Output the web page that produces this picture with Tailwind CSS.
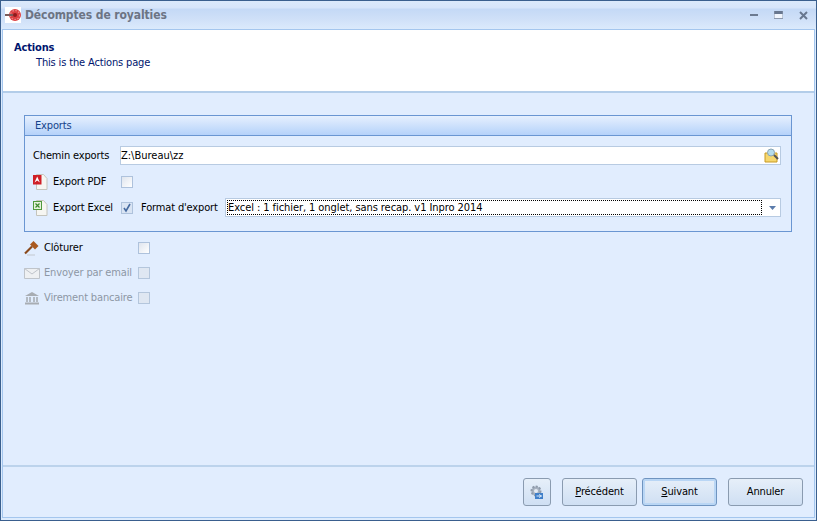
<!DOCTYPE html>
<html lang="fr">
<head>
  <meta charset="UTF-8" />
  <title>Décomptes de royalties</title>
  <script src="https://cdn.jsdelivr.net/npm/@tailwindcss/browser@4"></script>
</head>
<body class="w-[817px] h-[521px] overflow-hidden bg-[#e1edfe] font-['DejaVu_Sans_Condensed','DejaVu_Sans',sans-serif] text-[11px] leading-[14px] tracking-[-0.15px] text-black">
  <div class="w-full h-full flex flex-col border border-[#3a5f8e] bg-[#dcebfd]">
    <!-- title bar -->
    <div class="h-[28px] shrink-0 flex items-center pl-[4px] pr-[8px] bg-[linear-gradient(#dbe9fb_0,#d6e5fa_7px,#c4d9f6_8px,#cfe0f8_18px,#dbeafc_28px)]">
      <svg class="w-[16px] h-[16px] bg-white" viewBox="0 0 16 16">
        <circle cx="10" cy="8" r="6" fill="#dc3f42" />
        <circle cx="10" cy="8" r="4.5" fill="none" stroke="#ec8a8a" stroke-width="1.2" stroke-dasharray="1.5 1.5" />
        <circle cx="10" cy="8" r="2" fill="#8f1c1c" />
        <rect x="0" y="7" width="8" height="2" fill="#7a5a5a" />
      </svg>
      <span class="ml-[4px] font-bold text-[12px] text-[#6c7484] tracking-[-0.1px]">Décomptes de royalties</span>
      <div class="ml-auto flex items-center gap-[16px]">
        <svg class="w-[8px] h-[8px]" viewBox="0 0 8 8"><rect y="3" width="8" height="2" fill="#6c7a90" /></svg>
        <svg class="w-[9px] h-[8px]" viewBox="0 0 9 8"><path d="M0 0h9v8H0z" fill="#f0f5fd" /><path d="M0 0h9v3H0z" fill="#68778f" /><path d="M0 0v8M9 0v8M0 7.5h9" stroke="#8b98ad" /></svg>
        <svg class="w-[9px] h-[9px]" viewBox="0 0 9 9"><path d="M1 1l7 7M8 1L1 8" stroke="#68778f" stroke-width="2" /></svg>
      </div>
    </div>

    <div class="flex-1 mx-[1px] mb-[2px] flex flex-col border border-[#a4c6ee] bg-[#e1edfe]">
      <!-- page header -->
      <div class="h-[63px] shrink-0 bg-white border-b-2 border-[#b3cde9] pl-[11px] pt-[11px] text-[#00156e]">
        <div class="font-bold">Actions</div>
        <div class="pl-[22px] mt-[1px]">This is the Actions page</div>
      </div>

      <div class="flex-1 pl-[21px] pr-[22px] pt-[22px]">
        <!-- exports group -->
        <div class="h-[117px] border border-[#6a96d2]">
          <div class="h-[20px] flex items-center pl-[10px] pt-[1px] text-[#15428b] bg-[linear-gradient(#e6f0fe,#b5d2fa)] border-b border-[#6a96d2]">Exports</div>
          <div class="pl-[8px] pr-[10px] pt-[10px]">
            <div class="flex items-center h-[19px]">
              <span class="w-[87px]">Chemin exports</span>
              <div class="flex-1 h-[19px] bg-white border border-[#b8cbe2] flex items-center pl-[0px] pr-[1px]">
                <span class="tracking-[0px]">Z:\Bureau\zz</span>
                <svg class="ml-auto w-[15px] h-[15px]" viewBox="0 0 15 15">
                  <path d="M1 5h12v9H1z" fill="#f5d76e" stroke="#c79a25" />
                  <circle cx="7" cy="4.5" r="3.5" fill="#b5dcec" stroke="#8aa4b4" />
                  <path d="M10 7l4 4" stroke="#555" stroke-width="2" />
                </svg>
              </div>
            </div>
            <div class="flex items-center h-[18px] mt-[8px]">
              <svg class="w-[15px] h-[16px]" viewBox="0 0 15 16">
                <path d="M3.5.5h7l3.5 4v11H3.5z" fill="#f6f6f2" stroke="#c4c4bc" />
                <rect y="1" width="8.5" height="9.5" fill="#cf1f26" />
                <path d="M1.5 8.5l2.7-6 2.7 6-2.7-2z" fill="#fff" />
              </svg>
              <span class="ml-[5px] w-[68px]">Export PDF</span>
              <span class="w-[12px] h-[12px] bg-[linear-gradient(135deg,#dfe5ee,#fff)] border border-[#aec2dc]"></span>
            </div>
            <div class="flex items-center h-[19px] mt-[7px]">
              <svg class="w-[15px] h-[16px]" viewBox="0 0 15 16">
                <path d="M3.5.5h7l3.5 4v11H3.5z" fill="#f6f6f2" stroke="#c4c4bc" />
                <rect x=".5" y="1.5" width="8" height="8" fill="#e6f2dc" stroke="#4f9a3d" />
                <path d="M2.5 3.5l4 4M6.5 3.5l-4 4" stroke="#3d8a2e" stroke-width="1.2" />
              </svg>
              <span class="ml-[5px] w-[68px]">Export Excel</span>
              <span class="w-[12px] h-[12px] bg-[#d9e4f3] border border-[#aec2dc] flex items-center justify-center">
                <svg class="w-[10px] h-[10px]" viewBox="0 0 10 10"><path d="M2 5l2 3 4-7" fill="none" stroke="#44699f" stroke-width="1.6" /></svg>
              </span>
              <span class="ml-[8px] w-[84px]">Format d'export</span>
              <div class="flex-1 h-[19px] bg-white border border-[#b8cbe2] flex items-center pl-[1px]">
                <span class="w-[535px] h-[15px] border border-dotted border-black leading-[13px] tracking-[-0.07px] whitespace-nowrap">Excel : 1 fichier, 1 onglet, sans recap. v1 Inpro 2014</span>
                <svg class="ml-[7px] w-[7px] h-[4px]" viewBox="0 0 7 4"><path d="M0 0h7L3.5 4z" fill="#5b7cab" /></svg>
              </div>
            </div>
          </div>
        </div>

        <!-- actions -->
        <div class="mt-[7px] flex flex-col gap-[7px]">
          <div class="flex items-center h-[18px]">
            <svg class="w-[16px] h-[16px]" viewBox="0 0 16 16">
              <path d="M1 13.5L8 6.5" stroke="#8a4a1c" stroke-width="2.2" />
              <path d="M6 4.5L9.5 1l5 5L11 9.5z" fill="#a9591f" />
              <path d="M3 15h8" stroke="#c3c8cf" />
            </svg>
            <span class="ml-[4px] w-[94px]">Clôturer</span>
            <span class="w-[12px] h-[12px] bg-[linear-gradient(135deg,#dfe5ee,#fff)] border border-[#aec2dc]"></span>
          </div>
          <div class="flex items-center h-[18px] text-[#8d97a5]">
            <svg class="w-[16px] h-[16px]" viewBox="0 0 16 16">
              <path d="M.5 3.5h15v10H.5z" fill="#eef0f2" stroke="#bfc4ca" />
              <path d="M.5 3.5L8 9l7.5-5.5" fill="none" stroke="#bfc4ca" />
            </svg>
            <span class="ml-[4px] w-[94px] whitespace-nowrap">Envoyer par email</span>
            <span class="w-[12px] h-[12px] bg-[#dfe7f2] border border-[#b4c6dc]"></span>
          </div>
          <div class="flex items-center h-[18px] text-[#8d97a5]">
            <svg class="w-[16px] h-[16px]" viewBox="0 0 16 16">
              <path d="M1 6l7-4 7 4z" fill="#a8adb3" />
              <path d="M3 7v5M6 7v5M10 7v5M13 7v5" stroke="#a8adb3" stroke-width="1.6" />
              <path d="M1 13.5h14" stroke="#a8adb3" stroke-width="2" />
            </svg>
            <span class="ml-[4px] w-[94px] whitespace-nowrap">Virement bancaire</span>
            <span class="w-[12px] h-[12px] bg-[#dfe7f2] border border-[#b4c6dc]"></span>
          </div>
        </div>
      </div>

      <!-- footer -->
      <div class="h-[52px] shrink-0 border-t-2 border-[#bcd3ec] flex items-center justify-end pr-[11px]">
        <button class="w-[28px] h-[28px] rounded-[3px] border border-[#8a9bb0] bg-[linear-gradient(#e6eff9,#cfdff3)] flex items-center justify-center">
          <svg class="w-[16px] h-[16px]" viewBox="0 0 16 16">
            <circle cx="7" cy="7" r="4.5" fill="#a7b2c0" stroke="#8f9bab" stroke-width="2" stroke-dasharray="2 1.4" />
            <circle cx="7" cy="7" r="2" fill="#e4ebf4" />
            <path d="M6 9h8v6H6z" fill="#3f7fc9" />
            <path d="M7.5 12h5M10 10.5l2.5 1.5-2.5 1.5" fill="none" stroke="#d5e6f8" />
          </svg>
        </button>
        <button class="ml-[11px] w-[75px] h-[28px] rounded-[3px] border border-[#8a9bb0] bg-[linear-gradient(#e6eff9,#cfdff3)]"><u>P</u>récédent</button>
        <button class="ml-[5px] w-[75px] h-[28px] rounded-[3px] border border-[#6f94c0] ring-inset ring-2 ring-[#b9d6f5] bg-[linear-gradient(#e6eff9,#cfdff3)]"><u>S</u>uivant</button>
        <button class="ml-[11px] w-[75px] h-[28px] rounded-[3px] border border-[#8a9bb0] bg-[linear-gradient(#e6eff9,#cfdff3)]">Annuler</button>
      </div>
    </div>
  </div>
</body>
</html>
